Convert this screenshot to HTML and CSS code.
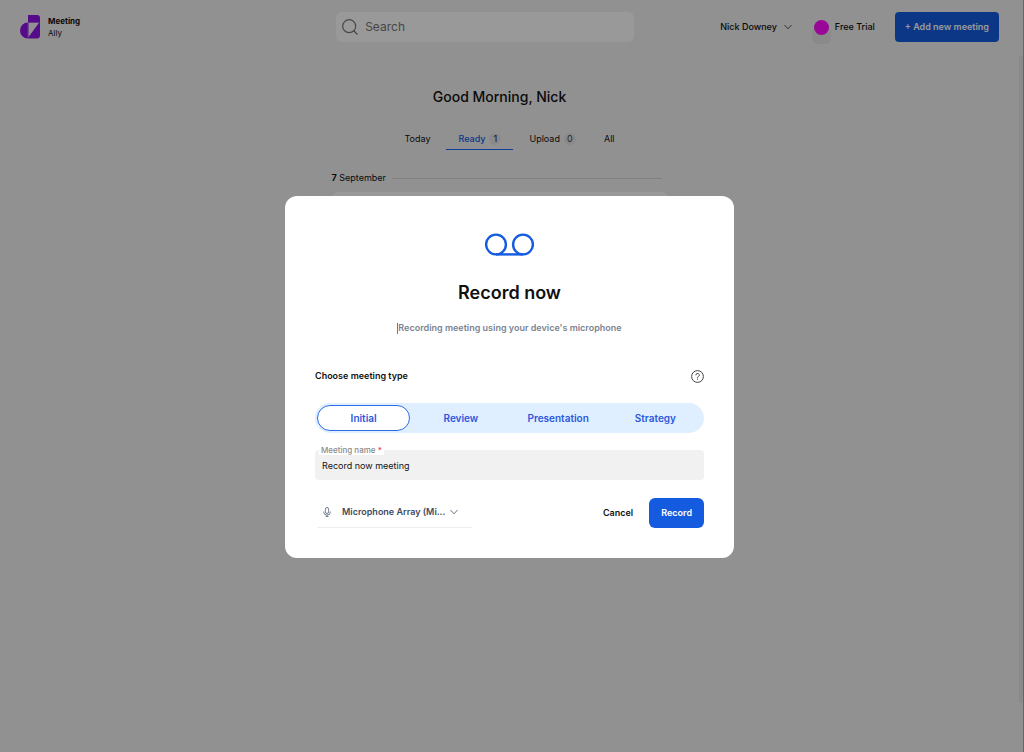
FILE: index.html
```html
<!DOCTYPE html>
<html lang="en">
<head>
  <meta charset="UTF-8">
  <meta name="viewport" content="width=device-width, initial-scale=1.0">
  <title>Meeting Ally</title>
  <link rel="stylesheet" href="styles.css">
</head>
<body>
  <header class="topbar">
    <a class="brand" href="#">
      <svg class="brand-logo" width="20" height="24" viewBox="0 0 20 24" aria-hidden="true">
        <path d="M8 0h9q3 0 3 3v17.500q0 3-3 3H8A8 8 0 0 1 8 7.500z" fill="#9013e6"/>
        <path d="M8.500 8H18.800L8.500 22z" fill="#f2f2f2"/>
        <path d="M8 7.500h11.500M8 7.500v15.500" stroke="#c48af0" stroke-width=".6"/>
      </svg>
      <span class="brand-name"><strong>Meeting</strong>Ally</span>
    </a>

    <label class="search">
      <svg width="16" height="16" viewBox="0 0 16 16" fill="none" stroke="#777" stroke-width="1.200" aria-hidden="true">
        <circle cx="7.200" cy="7.200" r="6.500"/>
        <path d="M11.500 11.500 15.500 15.500"/>
      </svg>
      <input type="search" placeholder="Search" aria-label="Search">
    </label>

    <nav class="account">
      <button class="user-menu" type="button">
        Nick Downey
        <svg width="8" height="6" viewBox="0 0 8 6" fill="none" stroke="#555" aria-hidden="true"><path d="M.5 1 4 4.800 7.500 1"/></svg>
      </button>
      <a class="plan" href="#"><span class="plan-dot"></span>Free Trial</a>
      <button class="btn btn-add" type="button">+ Add new meeting</button>
    </nav>
  </header>

  <main class="page">
    <h1 class="greeting">Good Morning, Nick</h1>

    <nav class="tabs">
      <a class="tab" href="#">Today</a>
      <a class="tab active" href="#">Ready <span class="count">1</span></a>
      <a class="tab" href="#">Upload <span class="count">0</span></a>
      <a class="tab" href="#">All</a>
    </nav>

    <section class="meetings">
      <h2 class="day"><span><b>7</b> September</span></h2>
      <div class="meeting-card"></div>
    </section>
  </main>

  <div class="scrollbar"></div>

  <div class="overlay">
    <form class="modal" role="dialog" aria-labelledby="modal-title">
      <svg class="modal-icon" width="49" height="24" viewBox="0 0 49 24" fill="none" stroke="#155be0" stroke-width="2.400" aria-hidden="true">
        <circle cx="11" cy="11.500" r="9.900"/>
        <circle cx="38" cy="11.500" r="9.900"/>
        <path d="M11 21.400h27"/>
      </svg>
      <h2 class="modal-title" id="modal-title">Record now</h2>
      <p class="modal-text"><span class="caret"></span>Recording meeting using your device's microphone</p>

      <div class="type-head">
        <span id="type-label">Choose meeting type</span>
        <button class="help" type="button" aria-label="Help">
          <svg width="13" height="13" viewBox="0 0 13 13" fill="none" stroke="#444" aria-hidden="true">
            <circle cx="6.500" cy="6.500" r="5.900"/>
            <path d="M4.900 5.200a1.700 1.600 0 1 1 2.600 1.200c-.7.400-1 .6-1 1.300M6.500 8.600v1.100"/>
          </svg>
        </button>
      </div>

      <div class="segments" role="radiogroup" aria-labelledby="type-label">
        <label class="segment"><input type="radio" name="type" checked><span>Initial</span></label>
        <label class="segment"><input type="radio" name="type"><span>Review</span></label>
        <label class="segment"><input type="radio" name="type"><span>Presentation</span></label>
        <label class="segment"><input type="radio" name="type"><span>Strategy</span></label>
      </div>

      <div class="field">
        <label for="meeting-name">Meeting name <em>*</em></label>
        <input id="meeting-name" type="text" value="Record now meeting">
      </div>

      <div class="modal-footer">
        <div class="mic">
          <svg width="8" height="10" viewBox="0 0 8 10" fill="none" stroke="#667085" stroke-width=".9" aria-hidden="true">
            <rect x="2.400" y=".5" width="3.200" height="6" rx="1.600"/>
            <path d="M.7 4.500v.6a3.300 3 0 0 0 6.600 0v-.6M4 8.100v1.700M2.500 9.600h3"/>
          </svg>
          <select aria-label="Microphone">
            <option>Microphone Array (Mi...</option>
          </select>
          <svg width="8" height="6" viewBox="0 0 8 6" fill="none" stroke="#667085" aria-hidden="true"><path d="M.5 1 4 4.800 7.500 1"/></svg>
        </div>
        <button class="btn btn-cancel" type="button">Cancel</button>
        <button class="btn btn-record" type="submit">Record</button>
      </div>
    </form>
  </div>
</body>
</html>
```
FILE: styles.css
```css
* {
  box-sizing: border-box;
}
body {
  margin: 0;
  padding-right: 5px;
  min-height: 100vh;
  background: #f2f2f2;
  color: #111;
  font-family: Inter, "Open Sans", sans-serif;
  font-size: 9px;
  line-height: 16px;
}
button, input, select {
  font: inherit;
  color: inherit;
  border: none;
  background: none;
  padding: 0;
}
a {
  color: inherit;
  text-decoration: none;
}
svg {
  flex: none;
}

/* header */
.topbar {
  display: grid;
  grid-template-columns: 13fr 298px 15fr;
  align-items: center;
  padding: 12px 20px;
}
.brand {
  display: flex;
  align-items: center;
  gap: 8px;
}
.brand-name {
  font-size: 8px;
  line-height: 12px;
}
.brand-name strong {
  display: block;
}
.search {
  display: flex;
  align-items: center;
  gap: 7px;
  height: 30px;
  padding: 0 6px;
  border-radius: 6px;
  background: #fff;
}
.search input {
  flex: 1;
  min-width: 0;
  font-size: 12px;
  outline: none;
}
.search input::placeholder {
  color: #777;
  opacity: 1;
}
.account {
  display: flex;
  align-items: center;
  justify-content: flex-end;
}
.user-menu {
  display: flex;
  align-items: center;
  gap: 7px;
  font-weight: 500;
}
.plan {
  display: flex;
  align-items: center;
  gap: 6px;
  margin: 0 20px 0 22px;
  font-weight: 500;
}
.plan-dot {
  position: relative;
  width: 15px;
  height: 15px;
  border-radius: 50%;
  background: #ff0dff;
}
.plan-dot::before {
  content: "";
  position: absolute;
  z-index: -1;
  top: 7px;
  left: -2px;
  width: 19px;
  height: 17px;
  border-radius: 6px;
  background: #e6e6e6;
}

.btn {
  height: 30px;
  border-radius: 6px;
  font-weight: 600;
}
.btn-add {
  padding: 0 10px;
  border-radius: 4px;
  background: #155be0;
  color: #fff;
}

/* page */
.page {
  padding-top: 31px;
}
.greeting {
  margin: 0 20px 19px 0;
  font-size: 14px;
  line-height: 24px;
  font-weight: 500;
  text-align: center;
}
.tabs {
  display: flex;
  justify-content: center;
  gap: 4px;
}
.tab {
  display: flex;
  align-items: center;
  gap: 4px;
  height: 22px;
  padding: 0 12px;
  border-bottom: 1px solid transparent;
}
.tab.active {
  border-color: #1a66ff;
  color: #155be0;
  font-weight: 500;
}
.count {
  width: 12px;
  height: 12px;
  border-radius: 6px;
  background: #e6e6e6;
  color: #444;
  line-height: 12px;
  text-align: center;
}
.meetings {
  max-width: 356px;
  margin: 20px auto 0;
  padding-right: 20px;
}
.day {
  display: flex;
  align-items: center;
  gap: 6px;
  margin: 0 6px 6px 0;
  font-size: 9px;
  font-weight: 400;
}
.day::after {
  content: "";
  flex: 1;
  height: 1px;
  background: #d8d8d8;
}
.meeting-card {
  height: 60px;
  border-radius: 6px;
  background: #fff;
}
.scrollbar {
  position: fixed;
  top: 0;
  right: 0;
  bottom: 0;
  width: 5px;
  padding-top: 56px;
  border-right: 1px solid #aaa;
}
.scrollbar::before {
  content: "";
  display: block;
  height: 93%;
  background: #e6e6e6;
}

/* modal */
.overlay {
  position: fixed;
  inset: 0;
  display: flex;
  align-items: center;
  justify-content: center;
  padding: 2px 5px 0 0;
  background: rgba(0, 0, 0, .4);
}
.modal {
  display: flex;
  flex-direction: column;
  width: 449px;
  max-width: 100%;
  padding: 37px 30px 30px;
  border-radius: 12px;
  background: #fff;
}
.modal-icon {
  align-self: center;
}
.modal-title {
  margin: 24px 0 15px;
  font-size: 18px;
  line-height: 24px;
  font-weight: 600;
  text-align: center;
}
.modal-text {
  margin: 0 0 32px;
  color: #7b8492;
  font-weight: 600;
  text-align: center;
}
.caret {
  display: inline-block;
  height: 11px;
  border-left: 1px solid #777;
  vertical-align: middle;
}
.type-head {
  display: flex;
  align-items: center;
  justify-content: space-between;
  height: 16px;
  margin-bottom: 19px;
  font-weight: 600;
}
.help {
  display: flex;
}
.segments {
  display: grid;
  grid-template-columns: repeat(4, 1fr);
  height: 30px;
  border-radius: 15px;
  background: #e0efff;
}
.segment {
  position: relative;
  display: flex;
  padding: 2px;
  color: #2b58dc;
  font-size: 10px;
  font-weight: 600;
}
.segment input {
  position: absolute;
  opacity: 0;
}
.segment span {
  flex: 1;
  border: 1px solid transparent;
  border-radius: 13px;
  line-height: 24px;
  text-align: center;
}
.segment input:checked + span {
  border-color: #2b6be6;
  background: #fff;
}
.field {
  position: relative;
  margin: 17px 0;
}
.field label {
  position: absolute;
  top: -4px;
  left: 4px;
  padding: 0 2px;
  background: #fff;
  color: #8a8a8a;
  font-size: 8px;
  line-height: 9px;
  font-weight: 500;
}
.field em {
  color: #f03030;
  font-style: normal;
}
.field input {
  display: block;
  width: 100%;
  height: 30px;
  padding: 0 7px;
  border-radius: 4px;
  background: #f1f1f1;
}
.modal-footer {
  display: flex;
  align-items: center;
}
.mic {
  display: flex;
  align-items: center;
  width: 155px;
  height: 31px;
  margin: 0 auto 0 2px;
  padding-left: 6px;
  border-bottom: 1px solid #eee;
  color: #414b5f;
  font-weight: 600;
}
.mic select {
  appearance: none;
  margin: 0 4px 0 11px;
}
.btn-cancel {
  margin-right: 16px;
}
.btn-record {
  padding: 0 12px;
  background: #155be0;
  color: #fff;
}
```
